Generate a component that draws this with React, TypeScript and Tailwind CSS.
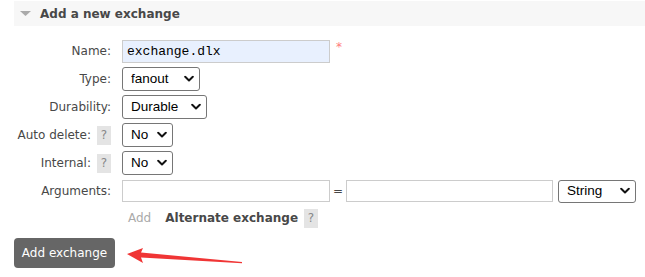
import React from "react";

function Chevron() {
  return (
    <svg width="10" height="7" viewBox="0 0 10 7" className="pointer-events-none absolute right-[6px] top-1/2 -translate-y-1/2">
      <path d="M1.2 1.3 L5 5 L8.8 1.3" fill="none" stroke="#111" strokeWidth="2" strokeLinecap="round" strokeLinejoin="round" />
    </svg>
  );
}

function Select({ value, w, h = "h-[24px]" }: { value: string; w: string; h?: string }) {
  return (
    <div className={`relative ${w} ${h}`}>
      <select
        defaultValue={value}
        className={`appearance-none w-full h-full border border-[#767676] rounded-[3px] bg-white pl-[8px] pr-[18px] text-[13.5px] text-black font-['Liberation_Sans',Arial,sans-serif] leading-none`}
      >
        <option value={value}>{value}</option>
      </select>
      <Chevron />
    </div>
  );
}

function Help() {
  return (
    <span className="inline-flex items-center justify-center w-[14px] h-[19px] bg-[#e4e4e4] text-[#888] text-[12px] leading-none">?</span>
  );
}

function Row({ label, help, children }: { label: string; help?: boolean; children: React.ReactNode }) {
  return (
    <div className="flex items-center h-[28px]">
      <div className="w-[98px] flex items-center justify-end gap-[6px] pr-[1px]">
        <span>{label}</span>
        {help && <Help />}
      </div>
      <div className="ml-[10px] flex items-center">{children}</div>
    </div>
  );
}

export default function App() {
  return (
    <div className="w-[645px] h-[277px] bg-white overflow-hidden font-['DejaVu_Sans',Verdana,sans-serif] text-[12px] text-[#484848]">
      <div className="pl-[14px] pt-[1px]">
        <div className="h-[25px] bg-[#f7f7f7] flex items-center">
          <svg width="11" height="5" viewBox="0 0 11 5" className="ml-[6px]">
            <path d="M0 0 H11 L5.5 5 Z" fill="#aaa" />
          </svg>
          <span className="ml-[9px] font-bold text-[12px] text-[#484848]">Add a new exchange</span>
        </div>

        <div className="mt-[11px]">
          <Row label="Name:">
            <input
              defaultValue="exchange.dlx"
              className="w-[208px] h-[23px] border border-[#cccccc] bg-[#e8f0fe] pl-[4px] text-[13px] text-black font-['Liberation_Mono','Courier_New',monospace]"
            />
            <span className="ml-[6px] -mt-[8px] text-[#ff7b7b] text-[12px]">*</span>
          </Row>
          <Row label="Type:">
            <Select value="fanout" w="w-[78px]" />
          </Row>
          <Row label="Durability:">
            <Select value="Durable" w="w-[85px]" />
          </Row>
          <Row label="Auto delete:" help>
            <Select value="No" w="w-[51px]" />
          </Row>
          <Row label="Internal:" help>
            <Select value="No" w="w-[51px]" />
          </Row>
          <Row label="Arguments:">
            <input className="w-[208px] h-[22px] border border-[#cccccc] bg-white" />
            <span className="w-[16px] text-center text-[12px]">=</span>
            <input className="w-[207px] h-[22px] border border-[#cccccc] bg-white" />
            <div className="ml-[5px]">
              <Select value="String" w="w-[78px]" h="h-[23px]" />
            </div>
          </Row>
          <div className="flex items-center h-[26px] pl-[114px]">
            <span className="text-[#aaaaaa]">Add</span>
            <span className="ml-[14px] font-bold">Alternate exchange</span>
            <span className="ml-[6px]"><Help /></span>
          </div>
        </div>

        <div className="mt-[7px] flex items-start">
          <button className="w-[101px] h-[30px] rounded-[4px] bg-[#666666] text-white text-[12px] flex items-center justify-center">
            Add exchange
          </button>
          <svg width="120" height="20" viewBox="0 0 120 20" className="ml-[12px] mt-[8px]">
            <path d="M0 8 L16 2 L14 6.5 L115 16 L115 17.3 L14 11.5 L16 17 Z" fill="#f03535" />
          </svg>
        </div>
      </div>
    </div>
  );
}
